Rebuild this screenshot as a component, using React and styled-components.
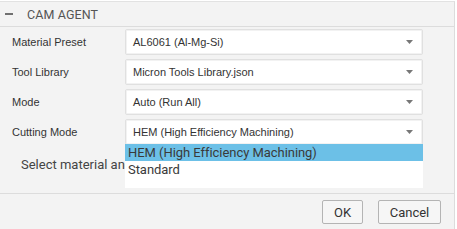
import React from "react";
import styled, { createGlobalStyle } from "styled-components";

const GlobalStyle = createGlobalStyle`
  html, body {
    margin: 0;
    padding: 0;
    background: #ffffff;
  }
`;

const Dialog = styled.div`
  margin-top: 1px;
  width: 455px;
  height: 228px;
  display: flex;
  flex-direction: column;
  background: #f3f3f3;
  border-top: 1px solid #e2e2e2;
  border-right: 1px solid #dcdcdc;
  box-sizing: border-box;
`;

const Header = styled.div`
  height: 25px;
  display: flex;
  align-items: center;
  border-bottom: 1px solid #dcdcdc;
  box-sizing: border-box;
  padding-left: 5px;
`;

const Collapse = styled.span`
  display: block;
  width: 8px;
  height: 2px;
  background: #707070;
  margin-right: 14px;
`;

const Title = styled.span`
  font-family: Roboto, "Liberation Sans", sans-serif;
  font-size: 12.5px;
  color: #555555;
  letter-spacing: 0.1px;
`;

const Body = styled.div`
  flex: 1;
  padding: 2px 0 0 12px;
`;

const Form = styled.div`
  display: grid;
  grid-template-columns: 113px 298px;
  grid-auto-rows: 26px;
  row-gap: 4px;
`;

const Label = styled.div`
  display: flex;
  align-items: center;
  font-family: "Liberation Sans", Arial, sans-serif;
  font-size: 11px;
  color: #333333;
`;

const SelectWrap = styled.div`
  position: relative;
`;

const Select = styled.div`
  height: 26px;
  box-sizing: border-box;
  display: flex;
  align-items: center;
  justify-content: space-between;
  padding: 0 9px 0 7px;
  background: #ffffff;
  border: 1px solid #e0e0e0;
  border-radius: 2px;
  box-shadow: inset 0 0 0 1px #f2f2f2;
  font-family: "Liberation Sans", Arial, sans-serif;
  font-size: 11px;
  color: #333333;
`;

const Arrow = () => (
  <svg width="7" height="4" viewBox="0 0 7 4">
    <polygon points="0,0 7,0 3.5,4" fill="#777777" />
  </svg>
);

const List = styled.div`
  position: absolute;
  top: calc(100% - 1px);
  left: 0;
  right: 0;
  height: 44px;
  background: #ffffff;
  z-index: 2;
`;

const Option = styled.div`
  height: 17px;
  line-height: 17px;
  padding-left: 3px;
  font-family: Roboto, "Noto Sans", sans-serif;
  font-size: 13px;
  letter-spacing: -0.05px;
  color: #3a3a3a;
  background: ${(p) => (p.$active ? "#6cc0e7" : "transparent")};
  white-space: nowrap;
`;

const Status = styled.div`
  margin-top: 10px;
  padding-left: 9px;
  line-height: 20px;
  font-family: Roboto, "Noto Sans", sans-serif;
  font-size: 13px;
  color: #444444;
  white-space: nowrap;
`;

const Footer = styled.div`
  height: 36px;
  box-sizing: border-box;
  border-top: 1px solid #dcdcdc;
  display: flex;
  justify-content: flex-end;
  align-items: flex-start;
  gap: 15px;
  padding: 6px 13px 0 0;
`;

const Button = styled.button`
  height: 24px;
  min-width: ${(p) => p.$w}px;
  box-sizing: border-box;
  background: #f6f6f6;
  border: 1px solid #b4b4b4;
  border-radius: 2px;
  font-family: Roboto, "Noto Sans", sans-serif;
  font-size: 13px;
  color: #333333;
  padding: 0 10px;
`;

const fields = [
  { label: "Material Preset", value: "AL6061 (Al-Mg-Si)" },
  { label: "Tool Library", value: "Micron Tools Library.json" },
  { label: "Mode", value: "Auto (Run All)" },
  { label: "Cutting Mode", value: "HEM (High Efficiency Machining)", open: true },
];

const cuttingModes = ["HEM (High Efficiency Machining)", "Standard"];

export default function App() {
  return (
    <>
      <GlobalStyle />
      <Dialog>
        <Header>
          <Collapse />
          <Title>CAM AGENT</Title>
        </Header>
        <Body>
          <Form>
            {fields.map((f) => (
              <React.Fragment key={f.label}>
                <Label>{f.label}</Label>
                <SelectWrap>
                  <Select>
                    <span>{f.value}</span>
                    <Arrow />
                  </Select>
                  {f.open && (
                    <List>
                      {cuttingModes.map((m, i) => (
                        <Option key={m} $active={i === 0}>
                          {m}
                        </Option>
                      ))}
                    </List>
                  )}
                </SelectWrap>
              </React.Fragment>
            ))}
          </Form>
          <Status>Select material and tool library, then press OK.</Status>
        </Body>
        <Footer>
          <Button $w={41}>OK</Button>
          <Button $w={63}>Cancel</Button>
        </Footer>
      </Dialog>
    </>
  );
}
